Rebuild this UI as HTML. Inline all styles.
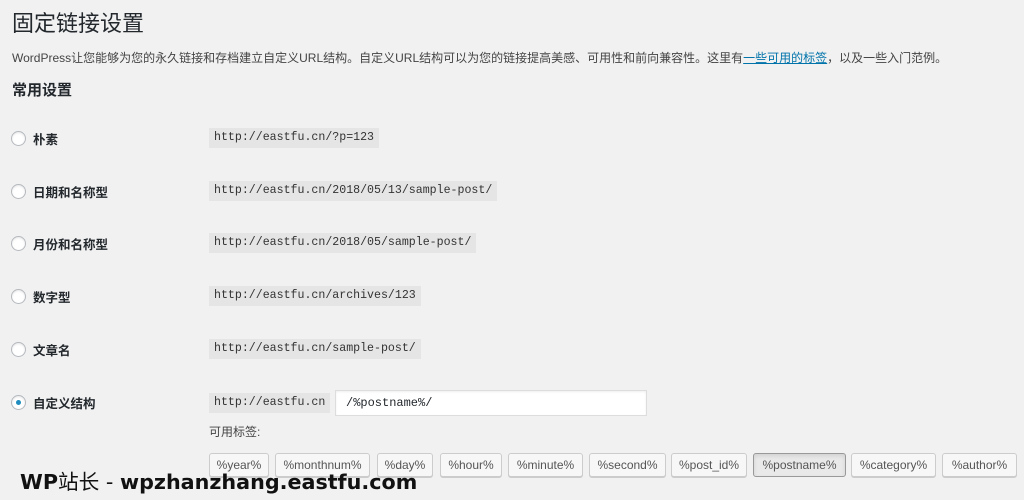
<!DOCTYPE html>
<html><head><meta charset="utf-8"><style>
body{margin:0;width:1024px;height:500px;background:#f1f1f1;position:relative;overflow:hidden;font-family:"Liberation Sans","Noto Sans CJK SC",sans-serif;color:#23282d}
.a{position:absolute;white-space:nowrap}
h1{position:absolute;left:12px;top:6px;margin:0;font-size:22px;font-weight:400}
.p{left:12px;top:49px;font-size:12px;color:#444}
.p a{color:#0073aa;text-decoration:underline}
.h2{left:12px;top:79px;font-size:15px;font-weight:700}
.r{width:13px;height:13px;border:1px solid #b4b9be;border-radius:50%;background:#fff;box-shadow:inset 0 1px 2px rgba(0,0,0,.1)}
.lb{font-size:12.5px;font-weight:700}
.c{font-family:"Liberation Mono",monospace;font-size:11.6px;background:#e5e5e5;padding:3px 5px;height:14px;line-height:14px;color:#333}
.in{left:335px;top:390px;width:300px;height:24px;background:#fff;border:1px solid #ddd;font-family:"Liberation Mono",monospace;font-size:12px;line-height:24px;padding-left:10px;box-shadow:inset 0 1px 2px rgba(0,0,0,.07)}
.b{top:453px;height:22px;line-height:22px;background:#f7f7f7;border:1px solid #ccc;border-radius:3px;font-size:12px;color:#555;text-align:center;box-shadow:0 1px 0 #ccc}
.wm{left:20px;top:465px;font-size:20.7px;font-weight:700;color:#111;font-family:"DejaVu Sans","Noto Sans CJK SC",sans-serif}
</style></head><body>
<h1>固定链接设置</h1>
<div class="a p">WordPress让您能够为您的永久链接和存档建立自定义URL结构。自定义URL结构可以为您的链接提高美感、可用性和前向兼容性。这里有<a>一些可用的标签</a>，以及一些入门范例。</div>
<div class="a h2">常用设置</div>

<div class="a r" style="left:11px;top:131px"></div><div class="a lb" style="left:33px;top:129px">朴素</div><div class="a c" style="left:209px;top:128px">http://eastfu.cn/?p=123</div>
<div class="a r" style="left:11px;top:184px"></div><div class="a lb" style="left:33px;top:182px">日期和名称型</div><div class="a c" style="left:209px;top:181px">http://eastfu.cn/2018/05/13/sample-post/</div>
<div class="a r" style="left:11px;top:236px"></div><div class="a lb" style="left:33px;top:234px">月份和名称型</div><div class="a c" style="left:209px;top:233px">http://eastfu.cn/2018/05/sample-post/</div>
<div class="a r" style="left:11px;top:289px"></div><div class="a lb" style="left:33px;top:287px">数字型</div><div class="a c" style="left:209px;top:286px">http://eastfu.cn/archives/123</div>
<div class="a r" style="left:11px;top:342px"></div><div class="a lb" style="left:33px;top:340px">文章名</div><div class="a c" style="left:209px;top:339px">http://eastfu.cn/sample-post/</div>
<div class="a r" style="left:11px;top:395px"></div><div class="a" style="left:16px;top:400px;width:5px;height:5px;border-radius:50%;background:#1e8cbe"></div><div class="a lb" style="left:33px;top:393px">自定义结构</div><div class="a c" style="left:209px;top:393px">http://eastfu.cn</div>
<div class="a in">/%postname%/</div>
<div class="a" style="left:209px;top:423px;font-size:12px;color:#444">可用标签:</div>

<div class="a b" style="left:209px;width:58px">%year%</div>
<div class="a b" style="left:275px;width:93px">%monthnum%</div>
<div class="a b" style="left:377px;width:54px">%day%</div>
<div class="a b" style="left:440px;width:60px">%hour%</div>
<div class="a b" style="left:508px;width:73px">%minute%</div>
<div class="a b" style="left:589px;width:75px">%second%</div>
<div class="a b" style="left:671px;width:74px">%post_id%</div>
<div class="a b" style="left:753px;width:91px;background:#e9e9e9;border-color:#999;box-shadow:inset 0 2px 4px rgba(0,0,0,.1)">%postname%</div>
<div class="a b" style="left:851px;width:83px">%category%</div>
<div class="a b" style="left:942px;width:73px">%author%</div>
<div class="a wm">WP<span style="font-weight:400">站长 - </span>wpzhanzhang.eastfu.com</div>
</body></html>
